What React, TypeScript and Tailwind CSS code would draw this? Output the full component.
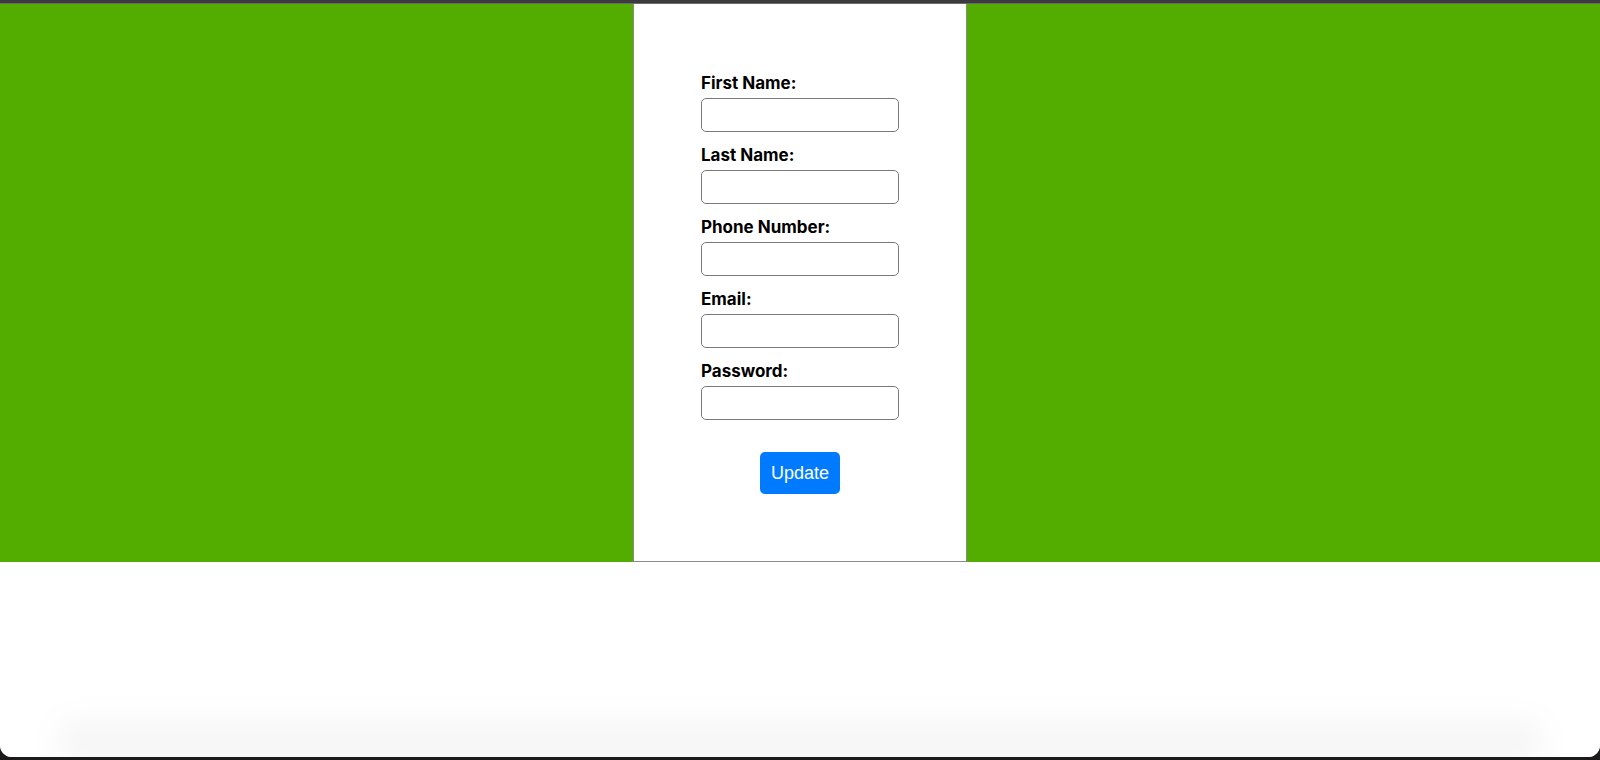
import { useState } from "react";

const fields = [
  { id: "firstName", label: "First Name:", type: "text" },
  { id: "lastName", label: "Last Name:", type: "text" },
  { id: "phone", label: "Phone Number:", type: "tel" },
  { id: "email", label: "Email:", type: "email" },
  { id: "password", label: "Password:", type: "password" },
];

export default function App() {
  const [values, setValues] = useState<Record<string, string>>({});

  return (
    <div className="h-[760px] w-full bg-[#1c1a1a] flex flex-col overflow-hidden">
      {/* window top edge */}
      <div className="h-[3px] bg-[#3b3b3d]" />
      <div className="h-[1px] bg-[#6a6a6a]" />

      <div className="flex-1 bg-white rounded-b-[12px] overflow-hidden flex flex-col mb-[3px]">
        <section className="h-[558px] bg-[#52ad00] flex justify-center shrink-0">
          <form
            className="w-[334px] h-full bg-white border-x border-b border-[#8a8a8a] pt-[69px] pl-[67px] flex flex-col"
            style={{ fontFamily: "Inter, 'Noto Sans', sans-serif" }}
            onSubmit={(e) => e.preventDefault()}
          >
            {fields.map((f) => (
              <div key={f.id} className="flex flex-col mb-[13px]">
                <label
                  htmlFor={f.id}
                  className="text-[17px] leading-[20px] font-bold text-black mb-[5px]"
                >
                  {f.label}
                </label>
                <input
                  id={f.id}
                  type={f.type}
                  value={values[f.id] ?? ""}
                  onChange={(e) => setValues({ ...values, [f.id]: e.target.value })}
                  className="w-[198px] h-[34px] border border-[#7a7a7a] rounded-[5px] bg-white px-2 text-sm outline-none"
                />
              </div>
            ))}
            <div className="w-[198px] flex justify-center mt-[19px]">
              <button
                type="submit"
                className="w-[80px] h-[42px] rounded-[5px] bg-[#007bff] text-white text-[18px] leading-none"
                style={{ fontFamily: "'Liberation Sans', Arial, sans-serif" }}
              >
                Update
              </button>
            </div>
          </form>
        </section>

        <div className="flex-1 relative bg-white">
          <div className="absolute bottom-0 left-[60px] right-[60px] h-[45px] bg-gradient-to-b from-transparent to-black/[0.07] blur-lg" />
        </div>
      </div>
    </div>
  );
}
